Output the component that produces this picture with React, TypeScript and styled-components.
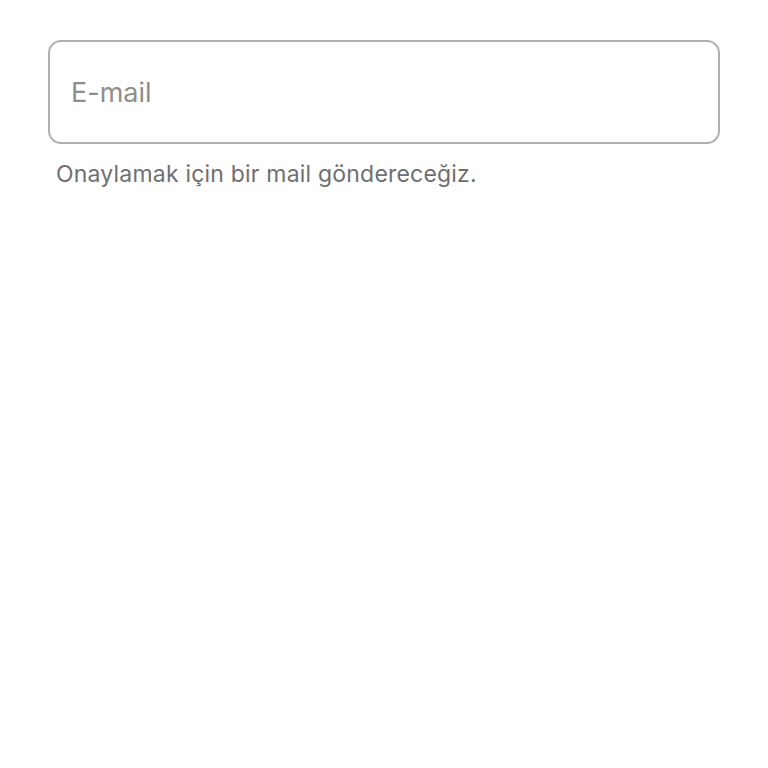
import React from "react";
import styled, { createGlobalStyle } from "styled-components";

const GlobalStyle = createGlobalStyle`
  html, body {
    margin: 0;
    padding: 0;
    background: #ffffff;
    font-family: "Inter", "Liberation Sans", Arial, sans-serif;
  }
`;

const Page = styled.div`
  display: flex;
  flex-direction: column;
  padding: 40px 48px 0 48px;
`;

const Field = styled.input`
  box-sizing: border-box;
  width: 100%;
  height: 104px;
  border: 2px solid #b0b0b0;
  border-radius: 13px;
  padding: 0 21px;
  font-family: inherit;
  font-size: 27px;
  color: #333;
  background: #fff;
  outline: none;

  &::placeholder {
    color: #8e8e8e;
  }
`;

const Hint = styled.div`
  margin-top: 16px;
  padding-left: 8px;
  font-size: 23px;
  color: #6f6f6f;
  letter-spacing: 0.2px;
`;

const App = () => {
  return (
    <Page>
      <GlobalStyle />
      <Field type="email" placeholder="E-mail" />
      <Hint>Onaylamak için bir mail göndereceğiz.</Hint>
    </Page>
  );
};

export default App;
